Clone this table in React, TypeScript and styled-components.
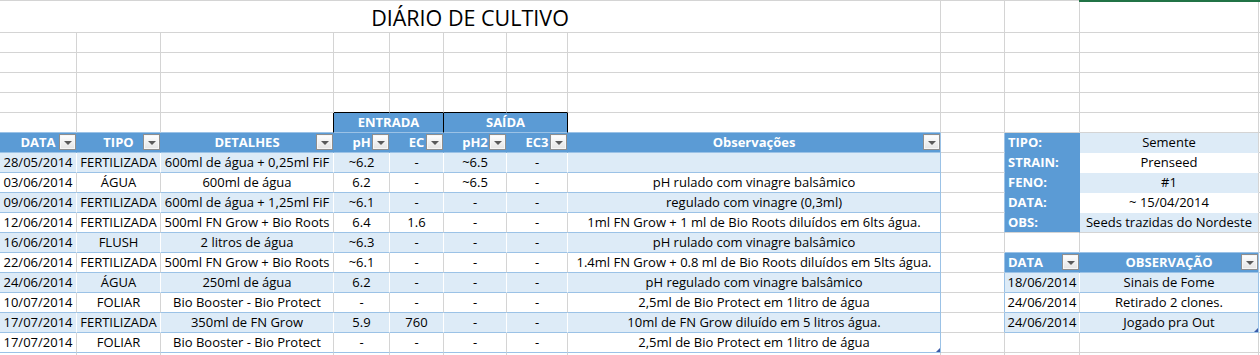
import React from "react";
import styled, { createGlobalStyle, css } from "styled-components";

const GRID = "#d4d4d4";
const BLUE = "#5b9bd5";
const BAND = "#ddebf7";
const LINE = "#9bc2e6";
const BLACK = "#000";

type Tone = "plain" | "head" | "band" | "row" | "label" | "fillBand" | "fillPlain";

const tones: Record<Tone, { bg: string; right: string; bottom: string }> = {
  plain: { bg: "#fff", right: GRID, bottom: GRID },
  head: { bg: BLUE, right: BLUE, bottom: LINE },
  band: { bg: BAND, right: "#fff", bottom: LINE },
  row: { bg: "#fff", right: GRID, bottom: LINE },
  label: { bg: BLUE, right: BLUE, bottom: BLUE },
  fillBand: { bg: BAND, right: GRID, bottom: BAND },
  fillPlain: { bg: "#fff", right: GRID, bottom: "#fff" },
};

const GlobalStyle = createGlobalStyle`
  body {
    margin: 0;
    background: #fff;
    font-family: "Open Sans", "Liberation Sans", sans-serif;
    font-size: 13px;
    color: #000;
  }
`;

const Page = styled.div`
  width: 1260px;
  height: 355px;
  overflow: hidden;
`;

const Sheet = styled.div`
  display: grid;
  width: 1280px;
  grid-template-columns: 77px 84px 173px 56px 54px 63px 61px 373px 64px 75px 179px 21px;
  grid-template-rows: 32px;
  grid-auto-rows: 20px;
  border-top: 1px solid ${GRID};
`;

interface CellProps {
  $tone?: Tone;
  $span?: number;
  $align?: "left" | "center";
  $right?: string;
  $bottom?: string;
  $handle?: boolean;
  $selected?: boolean;
}

const Cell = styled.div<CellProps>`
  position: relative;
  box-sizing: border-box;
  display: flex;
  align-items: center;
  justify-content: ${(p) => (p.$align === "left" ? "flex-start" : "center")};
  padding: 0 3px;
  white-space: nowrap;
  overflow: visible;
  line-height: 19px;
  grid-column: span ${(p) => p.$span ?? 1};
  background: ${(p) => tones[p.$tone ?? "plain"].bg};
  border-right: 1px solid ${(p) => p.$right ?? tones[p.$tone ?? "plain"].right};
  border-bottom: 1px solid ${(p) => p.$bottom ?? tones[p.$tone ?? "plain"].bottom};
  ${(p) =>
    (p.$tone === "head" || p.$tone === "label") &&
    css`
      color: #fff;
      font-weight: 700;
    `}
  ${(p) =>
    p.$handle &&
    css`
      &::after {
        content: "";
        position: absolute;
        right: 0;
        bottom: 0;
        border-style: solid;
        border-width: 0 0 4px 4px;
        border-color: transparent transparent #3b5aa8 transparent;
      }
    `}
  ${(p) =>
    p.$selected &&
    css`
      &::before {
        content: "";
        position: absolute;
        left: -1px;
        right: -1px;
        top: -1px;
        height: 2px;
        background: #217346;
      }
    `}
`;

const Title = styled(Cell)`
  font-size: 21.5px;
  padding-top: 3px;
  line-height: 28px;
`;

const FilterButton = styled.span`
  position: absolute;
  right: 0;
  top: 1px;
  width: 17px;
  height: 16px;
  box-sizing: border-box;
  border: 1px solid #8e8e8e;
  background: linear-gradient(#ffffff, #e4e4e4);
  box-shadow: inset 0 0 0 1px #f7f7f7;
  display: flex;
  align-items: center;
  justify-content: center;

  &::after {
    content: "";
    border-style: solid;
    border-width: 4px 4px 0 4px;
    border-color: #5a5a5a transparent transparent transparent;
    margin-top: 1px;
  }
`;

const Blank = (props: CellProps) => <Cell $tone="plain" {...props} />;

const mainCols = ["DATA", "TIPO", "DETALHES", "pH", "EC", "pH2", "EC3", "Observações"];

const entries: string[][] = [
  ["28/05/2014", "FERTILIZADA", "600ml de água + 0,25ml FiF", "~6.2", "-", "~6.5", "-", ""],
  ["03/06/2014", "ÁGUA", "600ml de água", "6.2", "-", "~6.5", "-", "pH rulado com vinagre balsâmico"],
  ["09/06/2014", "FERTILIZADA", "600ml de água + 1,25ml FiF", "~6.1", "-", "-", "-", "regulado com vinagre (0,3ml)"],
  ["12/06/2014", "FERTILIZADA", "500ml FN Grow + Bio Roots", "6.4", "1.6", "-", "-", "1ml FN Grow + 1 ml de Bio Roots diluídos em 6lts água."],
  ["16/06/2014", "FLUSH", "2 litros de água", "~6.3", "-", "-", "-", "pH rulado com vinagre balsâmico"],
  ["22/06/2014", "FERTILIZADA", "500ml FN Grow + Bio Roots", "~6.1", "-", "-", "-", "1.4ml FN Grow + 0.8 ml de Bio Roots diluídos em 5lts água."],
  ["24/06/2014", "ÁGUA", "250ml de água", "6.2", "-", "-", "-", "pH regulado com vinagre balsâmico"],
  ["10/07/2014", "FOLIAR", "Bio Booster - Bio Protect", "-", "-", "-", "-", "2,5ml de Bio Protect em 1litro de água"],
  ["17/07/2014", "FERTILIZADA", "350ml de FN Grow", "5.9", "760", "-", "-", "10ml de FN Grow diluído em 5 litros água."],
  ["17/07/2014", "FOLIAR", "Bio Booster - Bio Protect", "-", "-", "-", "-", "2,5ml de Bio Protect em 1litro de água"],
];

const info = [
  ["TIPO:", "Semente"],
  ["STRAIN:", "Prenseed"],
  ["FENO:", "#1"],
  ["DATA:", "~ 15/04/2014"],
  ["OBS:", "Seeds trazidas do Nordeste"],
];

const notes = [
  ["18/06/2014", "Sinais de Fome"],
  ["24/06/2014", "Retirado 2 clones."],
  ["24/06/2014", "Jogado pra Out"],
];

// columns I..L for sheet rows 7..18 (index 0 = table header row)
function SidePart({ index }: { index: number }) {
  if (index <= 4) {
    const [label, value] = info[index];
    const last = index === 4;
    return (
      <>
        <Blank $right={LINE} />
        <Cell $tone="label" $align="left" $bottom={last ? GRID : undefined}>
          {label}
        </Cell>
        <Cell $tone={index % 2 === 0 ? "fillBand" : "fillPlain"} $bottom={last ? GRID : undefined}>
          {value}
        </Cell>
        <Blank />
      </>
    );
  }
  if (index === 5) {
    return (
      <>
        <Blank />
        <Blank $bottom={LINE} />
        <Blank $bottom={LINE} />
        <Blank />
      </>
    );
  }
  if (index === 6) {
    return (
      <>
        <Blank $right={LINE} />
        <Cell $tone="head" $align="left">
          DATA
          <FilterButton />
        </Cell>
        <Cell $tone="head" $right={LINE}>
          OBSERVAÇÃO
          <FilterButton />
        </Cell>
        <Blank />
      </>
    );
  }
  if (index <= 9) {
    const n = index - 7;
    const tone: Tone = n % 2 === 0 ? "band" : "row";
    return (
      <>
        <Blank $right={LINE} />
        <Cell $tone={tone}>{notes[n][0]}</Cell>
        <Cell $tone={tone} $right={LINE} $handle={n === 2}>
          {notes[n][1]}
        </Cell>
        <Blank />
      </>
    );
  }
  return (
    <>
      <Blank />
      <Blank />
      <Blank />
      <Blank />
    </>
  );
}

const EmptyRow = () => (
  <>
    {Array.from({ length: 12 }, (_, i) => (
      <Blank key={i} />
    ))}
  </>
);

export default function App() {
  return (
    <Page>
      <GlobalStyle />
      <Sheet>
        {/* row 1 */}
        <Title $span={8}>DIÁRIO DE CULTIVO</Title>
        <Blank />
        <Blank />
        <Blank $selected />
        <Blank $selected />

        <EmptyRow />
        <EmptyRow />
        <EmptyRow />

        {/* row 5: top edge of the ENTRADA / SAÍDA block */}
        <Blank />
        <Blank />
        <Blank />
        <Blank $bottom={BLACK} />
        <Blank $bottom={BLACK} />
        <Blank $bottom={BLACK} />
        <Blank $bottom={BLACK} />
        <Blank />
        <Blank />
        <Blank />
        <Blank />
        <Blank />

        {/* row 6 */}
        <Blank $bottom={LINE} />
        <Blank $bottom={LINE} />
        <Blank $bottom={LINE} $right={BLACK} />
        <Cell $tone="head" $span={2} $right={BLACK}>
          ENTRADA
        </Cell>
        <Cell $tone="head" $span={2} $right={BLACK}>
          SAÍDA
        </Cell>
        <Blank $bottom={LINE} />
        <Blank />
        <Blank />
        <Blank />
        <Blank />

        {/* table header */}
        {mainCols.map((c, i) => (
          <Cell key={c} $tone="head" $right={i === 7 ? LINE : undefined}>
            {c}
            <FilterButton />
          </Cell>
        ))}
        <SidePart index={0} />

        {entries.map((row, r) => {
          const tone: Tone = r % 2 === 0 ? "band" : "row";
          return (
            <React.Fragment key={r}>
              {row.map((v, i) => (
                <Cell
                  key={i}
                  $tone={tone}
                  $right={i === 7 ? LINE : undefined}
                  $handle={i === 7 && r === entries.length - 1}
                >
                  {v}
                </Cell>
              ))}
              <SidePart index={r + 1} />
            </React.Fragment>
          );
        })}

        <EmptyRow />
      </Sheet>
    </Page>
  );
}
